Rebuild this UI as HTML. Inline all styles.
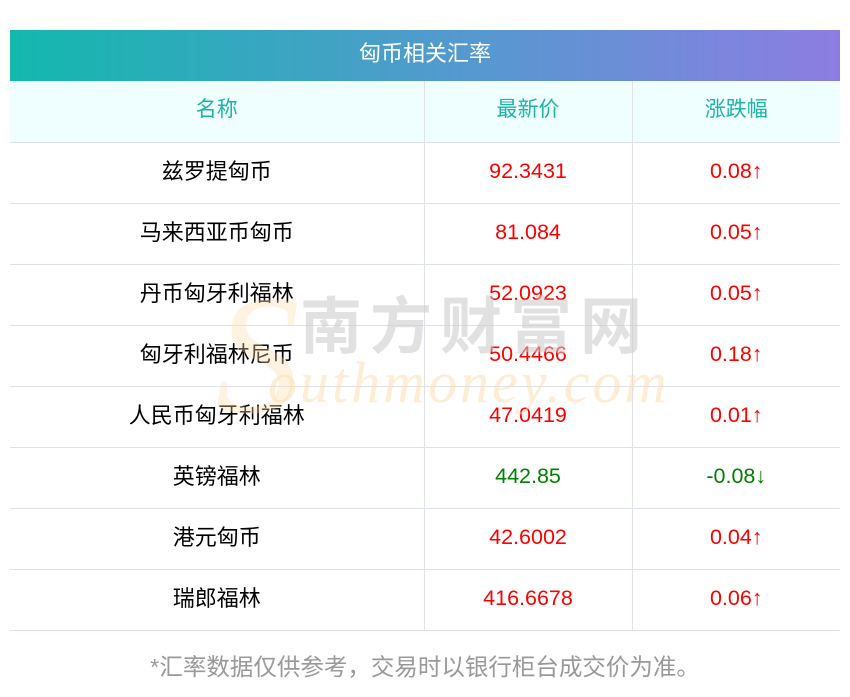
<!DOCTYPE html>
<html><head><meta charset="utf-8"><style>
body{margin:0;width:850px;height:697px;background:#fff;position:relative;overflow:hidden;font-family:"Liberation Sans","Noto Sans CJK SC",sans-serif}
.hd{position:absolute;left:10px;top:30px;width:830px;height:51px;background:linear-gradient(90deg,#13b8ad,#5b96d2 60%,#8d7de2);color:#fff;font-size:22px;text-align:center;line-height:48px}
table{position:absolute;left:10px;top:81px;width:830px;border-collapse:collapse;table-layout:fixed}
td{height:61px;border-bottom:1px solid #dfe1ea;border-left:1px solid #dfe1ea;text-align:center;font-size:21.5px;padding:0 0 3px 0;box-sizing:border-box}
td:first-child{border-left:none;font-size:22px;padding-bottom:6px}
tr.h td{background:#effefe;color:#1fb3a6;font-size:21px;padding-bottom:6px}
.r{color:#f00}.g{color:#008000}
.wm{position:absolute;pointer-events:none}
.ft{position:absolute;top:648px;left:0;width:850px;text-align:center;color:#999;font-size:23.5px}
</style></head><body>
<div class="hd">匈币相关汇率</div>
<table>
<col style="width:414px"><col style="width:208px"><col style="width:208px">
<tr class="h"><td>名称</td><td>最新价</td><td>涨跌幅</td></tr>
<tr><td>兹罗提匈币</td><td class="r">92.3431</td><td class="r">0.08↑</td></tr>
<tr><td>马来西亚币匈币</td><td class="r">81.084</td><td class="r">0.05↑</td></tr>
<tr><td>丹币匈牙利福林</td><td class="r">52.0923</td><td class="r">0.05↑</td></tr>
<tr><td>匈牙利福林尼币</td><td class="r">50.4466</td><td class="r">0.18↑</td></tr>
<tr><td>人民币匈牙利福林</td><td class="r">47.0419</td><td class="r">0.01↑</td></tr>
<tr><td>英镑福林</td><td class="g">442.85</td><td class="g">-0.08↓</td></tr>
<tr><td>港元匈币</td><td class="r">42.6002</td><td class="r">0.04↑</td></tr>
<tr><td>瑞郎福林</td><td class="r">416.6678</td><td class="r">0.06↑</td></tr>
</table>
<div class="wm" style="left:215px;top:270px;font-size:170px;font-style:italic;font-family:'Liberation Serif',serif;color:rgba(253,220,170,0.35);line-height:170px">S</div>
<div class="wm" style="left:300px;top:293px;font-size:62px;font-weight:bold;color:rgba(200,200,200,0.55);letter-spacing:8px;line-height:70px">南方财富网</div>
<div class="wm" style="left:268px;top:350px;font-size:58px;font-style:italic;font-family:'Liberation Serif',serif;color:rgba(253,220,170,0.5);letter-spacing:3px;line-height:66px">outhmoney.com</div>
<div class="ft">*汇率数据仅供参考，交易时以银行柜台成交价为准。</div>
</body></html>
